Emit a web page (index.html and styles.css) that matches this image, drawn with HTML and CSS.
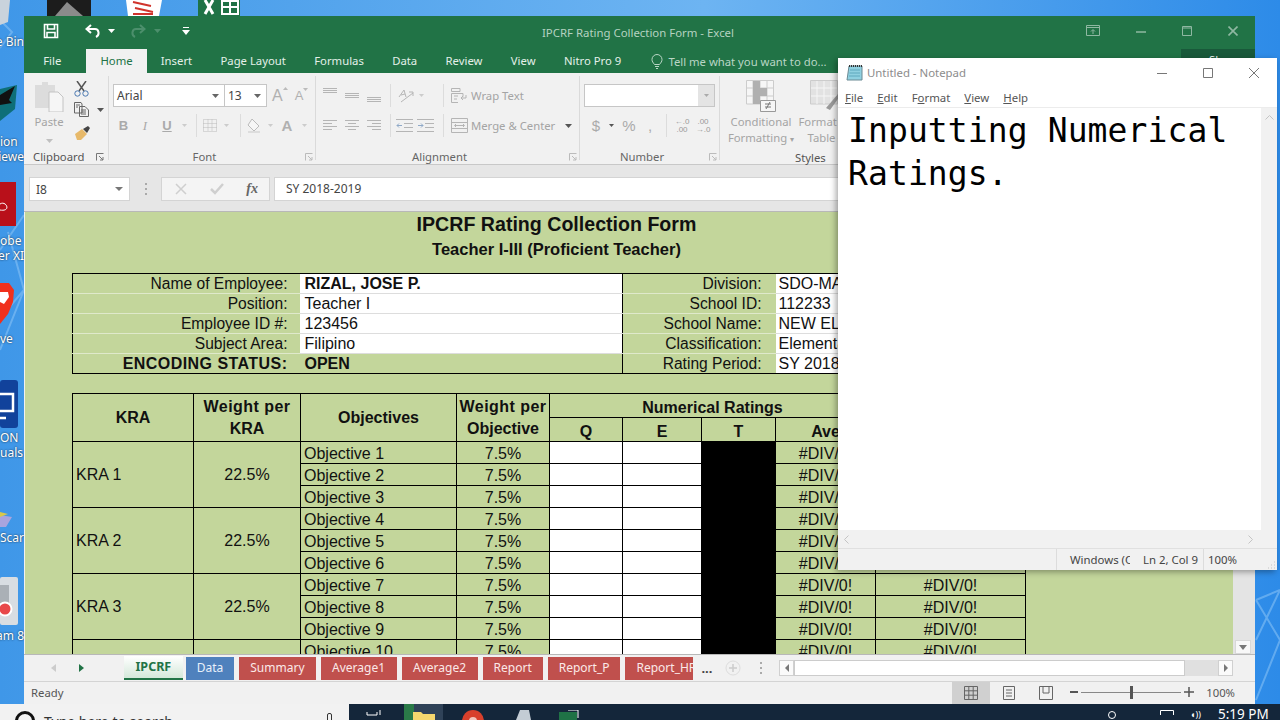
FILE: index.html
```html
<!DOCTYPE html>
<html lang="en">
<head>
<meta charset="utf-8">
<title>IPCRF Rating Collection Form - Excel</title>
<link rel="stylesheet" href="styles.css">
</head>
<body>
<div class="desktop">
  <svg class="wall" width="1280" height="720" viewBox="0 0 1280 720"><g stroke="#8cc4f5" stroke-width="2" fill="none" opacity=".55"><path d="M0 20 L12 32 L0 48"/><path d="M0 250 L24 215 M8 232 L24 290 L0 318 M24 290 L0 350"/><path d="M1256 640 L1280 590 M1256 600 L1280 640 L1256 700 M1280 590 L1256 600"/></g></svg>

  <div class="dicon d-bin"><svg width="12" height="26"><path d="M0 0H10L8 22L0 25Z" fill="#c9d3dc"/></svg></div>
  <div class="dlabel l-bin">e Bin</div>
  <div class="dicon d-top1"><svg width="44" height="16"><rect width="44" height="16" fill="#1c1c1c"/><path d="M8 16L20 2L36 16Z" fill="#8b8b8b"/></svg></div>
  <div class="dicon d-top2"><svg width="38" height="16"><path d="M1 0H37L34 16H3Z" fill="#fff"/><path d="M8 2L26 6M10 8L28 12M8 14H28" stroke="#d0342c" stroke-width="2" fill="none"/></svg></div>
  <div class="dicon d-top3"><svg width="44" height="16"><rect width="42" height="16" fill="#1f7246"/><path d="M7 0L15 14M15 0L7 14" stroke="#fff" stroke-width="3"/><path d="M24 1H40V14H24ZM24 7H40M32 1V14" stroke="#fff" stroke-width="2" fill="none"/></svg></div>
  <div class="dicon d-eagle"><svg width="17" height="36"><path d="M0 4L17 0L15 24L0 36Z" fill="#0e6f78"/><path d="M0 10L15 1L9 15L12 18L0 20Z" fill="#111"/></svg></div>
  <div class="dlabel l-ion">ion<br>iewe</div>
  <div class="dicon d-adobe"><svg width="16" height="44"><rect width="16" height="44" fill="#b9101a"/><path d="M0 22C6 18 12 30 0 28" stroke="#fff" fill="none"/></svg></div>
  <div class="dlabel l-obe">obe<br>er XI</div>
  <div class="dicon d-brave"><svg width="16" height="46"><path d="M0 3H9L14 10L13 22L8 34L0 44Z" fill="#f0301c"/><path d="M0 12H8L9 17L4 24L0 22Z" fill="#fff"/></svg></div>
  <div class="dlabel l-ve">ve</div>
  <div class="dicon d-mon"><svg width="18" height="48"><rect width="18" height="48" rx="3" fill="#11429b"/><path d="M0 14H13V31H0M0 38H6" stroke="#fff" stroke-width="2.5" fill="none"/></svg></div>
  <div class="dlabel l-on">ON<br>uals</div>
  <div class="dicon d-scan"><svg width="12" height="22"><path d="M0 10L12 12L6 22H0Z" fill="#a8a4de"/><path d="M0 7L8 9L0 12Z" fill="#d8c84a"/></svg></div>
  <div class="dlabel l-scar">Scar</div>
  <div class="dicon d-cam"><svg width="18" height="48"><rect width="18" height="48" rx="2" fill="#d8dde2"/><rect y="8" width="9" height="22" fill="#aab0b6"/><circle cx="5" cy="32" r="6.5" fill="#e8484a" stroke="#fff" stroke-width="2"/></svg></div>
  <div class="dlabel l-am">am 8</div>

  <main class="excel">
    <header class="titlebar">
      <div class="qat">
        <svg class="q-save" width="16" height="16" viewBox="0 0 16 16"><path d="M1.5 1.5H14.5V14.5H1.5ZM4.5 1.5V6H11.5V1.5M4 14.5V9.5H12V14.5" fill="none" stroke="#fff" stroke-width="1.6"/></svg>
        <svg class="q-undo" width="16" height="14" viewBox="0 0 16 14"><path d="M6 1L1.5 5L6 9M2 5H10C14 5 15 11 11 13" fill="none" stroke="#fff" stroke-width="2"/></svg>
        <svg class="q-caret" width="7" height="4"><path d="M0 0H7L3.5 4Z" fill="#fff"/></svg>
        <svg class="q-redo" width="16" height="14" viewBox="0 0 16 14"><path d="M10 1L14.5 5L10 9M14 5H6C2 5 1 11 5 13" fill="none" stroke="#4c8f6c" stroke-width="2"/></svg>
        <svg class="q-caret2" width="7" height="4"><path d="M0 0H7L3.5 4Z" fill="#4c8f6c"/></svg>
        <svg class="q-cust" width="8" height="8"><path d="M1 0H7V1H1ZM0 3H8L4 8Z" fill="#fff"/></svg>
      </div>
      <div class="doc-title">IPCRF Rating Collection Form - Excel</div>
      <div class="winctl">
        <svg width="14" height="12" viewBox="0 0 14 12"><path d="M.5.5H13.5V10.5H.5ZM.5 2.5H13.5M7 9V5M5 6.5L7 4.5L9 6.5" fill="none" stroke="#8fb8a2"/></svg>
        <svg width="10" height="10" viewBox="0 0 10 10"><path d="M0 6H10" stroke="#8fb8a2" stroke-width="1.5"/></svg>
        <svg width="10" height="10" viewBox="0 0 10 10"><path d="M.5.5H9.5V9.5H.5ZM.5 2H9.5" fill="none" stroke="#8fb8a2"/></svg>
        <svg width="10" height="10" viewBox="0 0 10 10"><path d="M.5.5L9.5 9.5M9.5.5L.5 9.5" stroke="#8fb8a2" stroke-width="1.6"/></svg>
      </div>
    </header>
    <nav class="tabs">
      <span class="rtab r-file">File</span>
      <span class="rtab active">Home</span>
      <span class="rtab">Insert</span>
      <span class="rtab">Page Layout</span>
      <span class="rtab">Formulas</span>
      <span class="rtab">Data</span>
      <span class="rtab">Review</span>
      <span class="rtab">View</span>
      <span class="rtab">Nitro Pro 9</span>
      <span class="tell"><svg width="12" height="15" viewBox="0 0 12 15"><path d="M3.5 10.5C2 8.5 1 7.500 1 5.500A5 5 0 0 1 11 5.500C11 7.500 10 8.500 8.500 10.500ZM4 12.500H8M5 14.500H7" fill="none" stroke="#b9d6c5"/></svg>Tell me what you want to do...</span>
      <span class="signin">Sign in</span>
      <span class="share">Share</span>
    </nav>

    <section class="ribbon">
      <div class="group g-clip">
        <div class="clip-body">
          <div class="paste">
            <svg width="30" height="31" viewBox="0 0 30 31"><path d="M1 4H8V1H14V4H21V27H1Z" fill="#dcdcdc"/><path d="M15 11H24L29 16V31H15Z" fill="#f6f6f6" stroke="#c4c4c4"/></svg>
            <span>Paste</span>
            <svg width="7" height="4"><path d="M0 0H7L3.500 4Z" fill="#c0c0c0"/></svg>
          </div>
          <div class="clip-tools">
            <svg width="15" height="16" viewBox="0 0 15 16"><path d="M3 0L10 10M12 0L5 10" stroke="#555" stroke-width="1.500"/><circle cx="3.500" cy="12.500" r="2.700" fill="none" stroke="#4a78b0"/><circle cx="11.500" cy="12.500" r="2.700" fill="none" stroke="#4a78b0"/></svg>
            <div class="copyrow"><svg width="15" height="15" viewBox="0 0 15 15"><path d="M.5.5H7L8 2V11H.5ZM5.500 4.500H11L14.500 8V14.500H5.500Z" fill="#f1f1f1" stroke="#666"/><path d="M2 3H6M2 5H4M7 8H12M7 10H12M7 12H12" stroke="#666"/></svg><svg width="7" height="4"><path d="M0 0H7L3.500 4Z" fill="#555"/></svg></div>
            <svg width="16" height="14" viewBox="0 0 16 14"><path d="M1 8L8 3L13 8L7 14H3Z" fill="#e7b96a"/><path d="M9 3L14 0L16 2L13 7Z" fill="#444"/></svg>
          </div>
        </div>
        <div class="glabel lab-clip">Clipboard<svg class="launch" width="8" height="8"><path d="M.5 7.500V.5H7.500M3 3L7 7M4 7H7V4" fill="none" stroke="#777"/></svg></div>
      </div>

      <div class="group g-font">
        <div class="tools">
          <div class="row">
            <div class="combo c-font">Arial<svg width="7" height="4"><path d="M0 0H7L3.500 4Z" fill="#666"/></svg></div>
            <div class="combo c-size">13<svg width="7" height="4"><path d="M0 0H7L3.500 4Z" fill="#666"/></svg></div>
            <span class="bigA a1">A<svg width="5" height="3"><path d="M0 3H5L2.500 0Z" fill="#bbb"/></svg></span>
            <span class="bigA a2">A<svg width="5" height="3"><path d="M0 0H5L2.500 3Z" fill="#bbb"/></svg></span>
          </div>
          <div class="row">
            <span class="cell w21 fmt bold">B</span>
            <span class="cell w22 fmt ital">I</span>
            <span class="cell w22 fmt und">U</span>
            <span class="cell w12"><svg width="5" height="3"><path d="M0 0H5L2.500 3Z" fill="#ccc"/></svg></span>
            <span class="cell w12"><i class="sep"></i></span>
            <span class="cell w16"><svg width="14" height="13" viewBox="0 0 14 13"><path d="M.5.5H13.500V12.500H.5ZM5 .5V12.500M9 .5V12.500M.5 4.500H13.500M.5 8.500H13.500" fill="none" stroke="#bbb" stroke-dasharray="1 1"/></svg></span>
            <span class="cell w16"><svg width="5" height="3"><path d="M0 0H5L2.500 3Z" fill="#ccc"/></svg></span>
            <span class="cell w12"><i class="sep"></i></span>
            <span class="cell w16"><svg width="15" height="15" viewBox="0 0 15 15"><path d="M5 1L12 8L7 13L1 7Z" fill="#f6f6f6" stroke="#bbb"/><path d="M1 14H13" stroke="#ddd" stroke-width="2"/></svg></span>
            <span class="cell w16"><svg width="5" height="3"><path d="M0 0H5L2.500 3Z" fill="#ccc"/></svg></span>
            <span class="cell w18 bigA a3">A</span>
            <span class="cell w16"><svg width="5" height="3"><path d="M0 0H5L2.500 3Z" fill="#ccc"/></svg></span>
          </div>
        </div>
        <div class="glabel lab-c">Font<svg class="launch" width="8" height="8"><path d="M.5 7.500V.5H7.500M3 3L7 7M4 7H7V4" fill="none" stroke="#bbb"/></svg></div>
      </div>

      <div class="group g-align">
        <div class="tools">
          <div class="row">
            <span class="cell w22 top"><svg width="14" height="6"><path d="M0 .5H14M0 2.500H14M0 4.500H14" stroke="#b5b5b5"/></svg></span>
            <span class="cell w22"><svg width="14" height="6"><path d="M0 .5H14M0 2.500H14M0 4.500H14" stroke="#b5b5b5"/></svg></span>
            <span class="cell w22 bot"><svg width="14" height="6"><path d="M0 .5H14M0 2.500H14M0 4.500H14" stroke="#b5b5b5"/></svg></span>
            <span class="cell w10"><i class="sep"></i></span>
            <span class="cell w22"><svg width="16" height="14" viewBox="0 0 16 14"><path d="M1 8L6 1L8 8M3 6L7 5M3 13L15 4M11 3H15V7" fill="none" stroke="#b5b5b5"/></svg></span>
            <span class="cell w8"><svg width="5" height="3"><path d="M0 0H5L2.500 3Z" fill="#ccc"/></svg></span>
            <span class="cell w13"></span>
            <span class="cell w10"><i class="sep"></i></span>
            <svg class="ic-l" width="17" height="15" viewBox="0 0 17 15"><path d="M.5.5H9V3.500H.5ZM.5 5.500H12V8.500M.5 5.500V14.500H7M3 8H7M3 11H6M15 7V10H10M12 8L10 10L12 12" fill="none" stroke="#b5b5b5"/></svg>
            <span class="dim-text">Wrap Text</span>
          </div>
          <div class="row">
            <span class="cell w22"><svg width="14" height="11"><path d="M0 .5H14M0 3.500H9M0 6.500H14M0 9.500H9" stroke="#b5b5b5"/></svg></span>
            <span class="cell w22"><svg width="14" height="11"><path d="M0 .5H14M3 3.500H11M0 6.500H14M3 9.500H11" stroke="#b5b5b5"/></svg></span>
            <span class="cell w22"><svg width="14" height="11"><path d="M0 .5H14M5 3.500H14M0 6.500H14M5 9.500H14" stroke="#b5b5b5"/></svg></span>
            <span class="cell w10"><i class="sep"></i></span>
            <span class="cell w18"><svg width="17" height="13" viewBox="0 0 17 13"><path d="M0 .5H17M8 4.500H17M8 8.500H17M0 12.500H17" stroke="#b5b5b5"/><path d="M6 6.500H1M3 4.500L1 6.500L3 8.500" stroke="#8fa9c8" fill="none"/></svg></span>
            <span class="cell w25"><svg width="17" height="13" viewBox="0 0 17 13"><path d="M0 .5H17M8 4.500H17M8 8.500H17M0 12.500H17" stroke="#b5b5b5"/><path d="M1 6.500H6M4 4.500L6 6.500L4 8.500" stroke="#8fa9c8" fill="none"/></svg></span>
            <span class="cell w10"><i class="sep"></i></span>
            <svg class="ic-l" width="17" height="15" viewBox="0 0 17 15"><path d="M.5.5H16.500V14.500H.5ZM.5 4.500H16.500M.5 10.500H16.500M4 7.500H13M5 6L3.500 7.500L5 9M12 6L13.500 7.500L12 9" fill="none" stroke="#b5b5b5"/></svg>
            <span class="dim-text">Merge &amp; Center</span>
            <svg class="merge-caret" width="7" height="4"><path d="M0 0H7L3.500 4Z" fill="#555"/></svg>
          </div>
        </div>
        <div class="glabel lab-c">Alignment<svg class="launch" width="8" height="8"><path d="M.5 7.500V.5H7.500M3 3L7 7M4 7H7V4" fill="none" stroke="#bbb"/></svg></div>
      </div>

      <div class="group g-num">
        <div class="tools">
          <div class="row">
            <div class="combo c-num"><b class="combo-btn"><svg width="5" height="3"><path d="M0 0H5L2.500 3Z" fill="#aaa"/></svg></b></div>
          </div>
          <div class="row">
            <span class="cell w24 money">$</span>
            <span class="cell w6"><svg width="5" height="3"><path d="M0 0H5L2.500 3Z" fill="#555"/></svg></span>
            <span class="cell w30 money">%</span>
            <span class="cell w12 money">,</span>
            <span class="cell w10 ml5"><i class="sep"></i></span>
            <span class="cell w22 dec">←.0<br>.00</span>
            <span class="cell w20 dec">.00<br>→.0</span>
          </div>
        </div>
        <div class="glabel lab-c">Number<svg class="launch" width="8" height="8"><path d="M.5 7.500V.5H7.500M3 3L7 7M4 7H7V4" fill="none" stroke="#bbb"/></svg></div>
      </div>

      <div class="group g-styles">
        <div class="style-body">
          <div class="style-btn sb-cond">
            <svg width="30" height="32" viewBox="0 0 30 32"><path d="M.5.5H27.500V24H.5Z" fill="#f6f6f6" stroke="#ccc"/><path d="M7 1V24M14 1V24M21 1V24M1 8H27M1 16H27" stroke="#ccc"/><path d="M7 1H14V8H21V16H14V24H7Z" fill="#b0b0b0"/><path d="M14.500 20.500H29.500V31.500H14.500Z" fill="#f6f6f6" stroke="#999"/><path d="M19 24H25M19 27H25M24 22L20 29" stroke="#777"/></svg>
            <span>Conditional<br>Formatting <small>▾</small></span>
          </div>
          <div class="style-btn sb-table">
            <svg width="30" height="32" viewBox="0 0 30 32"><path d="M.5.5H27.500V24H.5Z" fill="#e2e2e2" stroke="#ccc"/><path d="M7 1V24M14 1V24M21 1V24M1 8H27M1 16H27" stroke="#f6f6f6"/><path d="M16 28L28 14L30 16L20 30Z" fill="#999"/></svg>
            <span>Format as<br>Table <small>▾</small></span>
          </div>
        </div>
        <div class="glabel lab-styles">Styles</div>
      </div>
    </section>

    <section class="fbar">
      <div class="namebox">I8<svg width="8" height="4"><path d="M0 0H8L4 4Z" fill="#777"/></svg></div>
      <div class="fdots"><i></i><i></i><i></i></div>
      <div class="fbtns">
        <svg width="12" height="12" viewBox="0 0 12 12"><path d="M1 1L11 11M11 1L1 11" stroke="#cfcfcf" stroke-width="1.500"/></svg>
        <svg width="14" height="12" viewBox="0 0 14 12"><path d="M1 6L5 10L13 1" fill="none" stroke="#cfcfcf" stroke-width="2.500"/></svg>
        <span class="fx">fx</span>
      </div>
      <div class="finput">SY 2018-2019</div>
    </section>

    <section class="workspace">
      <div class="sheet">
        <div class="sheet-inner">
          <h1 class="s-title">IPCRF Rating Collection Form</h1>
          <h2 class="s-sub">Teacher I-III (Proficient Teacher)</h2>
          <table class="info">
            <colgroup><col class="ic1"><col class="ic2"><col class="ic3"><col class="ic4"></colgroup>
            <tr><td class="lbl">Name of Employee:</td><td class="val strong">RIZAL, JOSE P.</td><td class="lbl div">Division:</td><td class="val">SDO-MANILA</td></tr>
            <tr><td class="lbl">Position:</td><td class="val">Teacher I</td><td class="lbl div">School ID:</td><td class="val">112233</td></tr>
            <tr><td class="lbl">Employee ID #:</td><td class="val">123456</td><td class="lbl div">School Name:</td><td class="val">NEW ELEMENTARY</td></tr>
            <tr><td class="lbl">Subject Area:</td><td class="val">Filipino</td><td class="lbl div">Classification:</td><td class="val">Elementary</td></tr>
            <tr class="last"><td class="lbl status-lbl">ENCODING STATUS:</td><td class="plain strong">OPEN</td><td class="lbl div">Rating Period:</td><td class="val">SY 2018-2019</td></tr>
          </table>
          <table class="rate">
            <colgroup><col class="c1"><col class="c2"><col class="c3"><col class="c4"><col class="c5"><col class="c6"><col class="c7"><col class="c8"><col class="c9"></colgroup>
            <tr class="h1"><th rowspan="2">KRA</th><th rowspan="2"><span class="wide">Weight per</span><br>KRA</th><th rowspan="2">Objectives</th><th rowspan="2"><span class="wide">Weight per</span><br>Objective</th><th colspan="4">Numerical Ratings</th><th rowspan="2">Weighted Score</th></tr>
            <tr class="h2"><th>Q</th><th>E</th><th>T</th><th>Ave</th></tr>
            <tr><td rowspan="3" class="left">KRA 1</td><td rowspan="3">22.5%</td><td class="left">Objective 1</td><td>7.5%</td><td class="w"></td><td class="w"></td><td class="k"></td><td>#DIV/0!</td><td>#DIV/0!</td></tr>
            <tr><td class="left">Objective 2</td><td>7.5%</td><td class="w"></td><td class="w"></td><td class="k"></td><td>#DIV/0!</td><td>#DIV/0!</td></tr>
            <tr><td class="left">Objective 3</td><td>7.5%</td><td class="w"></td><td class="w"></td><td class="k"></td><td>#DIV/0!</td><td>#DIV/0!</td></tr>
            <tr><td rowspan="3" class="left">KRA 2</td><td rowspan="3">22.5%</td><td class="left">Objective 4</td><td>7.5%</td><td class="w"></td><td class="w"></td><td class="k"></td><td>#DIV/0!</td><td>#DIV/0!</td></tr>
            <tr><td class="left">Objective 5</td><td>7.5%</td><td class="w"></td><td class="w"></td><td class="k"></td><td>#DIV/0!</td><td>#DIV/0!</td></tr>
            <tr><td class="left">Objective 6</td><td>7.5%</td><td class="w"></td><td class="w"></td><td class="k"></td><td>#DIV/0!</td><td>#DIV/0!</td></tr>
            <tr><td rowspan="3" class="left">KRA 3</td><td rowspan="3">22.5%</td><td class="left">Objective 7</td><td>7.5%</td><td class="w"></td><td class="w"></td><td class="k"></td><td>#DIV/0!</td><td>#DIV/0!</td></tr>
            <tr><td class="left">Objective 8</td><td>7.5%</td><td class="w"></td><td class="w"></td><td class="k"></td><td>#DIV/0!</td><td>#DIV/0!</td></tr>
            <tr><td class="left">Objective 9</td><td>7.5%</td><td class="w"></td><td class="w"></td><td class="k"></td><td>#DIV/0!</td><td>#DIV/0!</td></tr>
            <tr><td rowspan="3" class="left"></td><td rowspan="3"></td><td class="left">Objective 10</td><td>7.5%</td><td class="w"></td><td class="w"></td><td class="k"></td><td>#DIV/0!</td><td>#DIV/0!</td></tr>
          </table>
        </div>
      </div>
      <div class="vscroll"><span class="sbtn"><svg width="8" height="5"><path d="M0 0H8L4 5Z" fill="#777"/></svg></span></div>
    </section>

    <section class="sheetbar">
      <div class="tabnav">
        <svg width="5" height="8"><path d="M5 0V8L0 4Z" fill="#ccc"/></svg>
        <svg width="5" height="8"><path d="M0 0V8L5 4Z" fill="#217346"/></svg>
      </div>
      <div class="stabs">
        <span class="stab on">IPCRF</span>
        <span class="stab blue">Data</span>
        <span class="stab red">Summary</span>
        <span class="stab red avg">Average1</span>
        <span class="stab red avg">Average2</span>
        <span class="stab red">Report</span>
        <span class="stab red">Report_P</span>
        <span class="stab red clipped">Report_HR</span>
      </div>
      <span class="more">...</span>
      <svg class="addsheet" width="16" height="16" viewBox="0 0 16 16"><circle cx="8" cy="8" r="7" fill="none" stroke="#ddd"/><path d="M8 4V12M4 8H12" stroke="#ccc" stroke-width="1.500"/></svg>
      <div class="fdots sdots"><i></i><i></i><i></i></div>
      <div class="hscroll">
        <span class="hbtn"><svg width="4" height="8"><path d="M4 0V8L0 4Z" fill="#777"/></svg></span>
        <span class="hthumb"></span>
        <span class="hbtn hbtn-r"><svg width="4" height="8"><path d="M0 0V8L4 4Z" fill="#777"/></svg></span>
      </div>
    </section>

    <footer class="status">
      <span>Ready</span>
      <div class="views">
        <span class="vw on"><svg width="14" height="14" viewBox="0 0 14 14"><path d="M.5.5H13.500V13.500H.5ZM.5 4.800H13.500M.5 9.200H13.500M4.800.5V13.500M9.200.5V13.500" fill="none" stroke="#666"/></svg></span>
        <span class="vw"><svg width="12" height="14" viewBox="0 0 12 14"><path d="M.5.5H11.500V13.500H.5ZM3 4H9M3 7H9M3 10H9" fill="none" stroke="#666"/></svg></span>
        <span class="vw"><svg width="14" height="14" viewBox="0 0 14 14"><path d="M.5.5H13.500V13.500H.5ZM4 .5V7H10V.5" fill="none" stroke="#666"/></svg></span>
      </div>
      <div class="zoom">
        <svg width="8" height="8"><path d="M0 4H8" stroke="#555" stroke-width="2"/></svg>
        <span class="zline"><i></i></span>
        <svg width="10" height="10"><path d="M0 5H10M5 0V10" stroke="#555" stroke-width="1.500"/></svg>
      </div>
      <span class="zpct">100%</span>
    </footer>
  </main>

  <aside class="notepad">
    <div class="np-title">
      <svg width="17" height="17" viewBox="0 0 17 17"><path d="M3 2H16V16H1Z" fill="#8fd0e0" stroke="#6a8a94"/><path d="M3 2H16" stroke="#333" stroke-width="2" stroke-dasharray="1 1"/><path d="M4 6H14M3.500 9H14M3 12H14" stroke="#5fa8bd"/></svg>
      <span class="np-name">Untitled - Notepad</span>
      <div class="np-ctl">
        <svg width="10" height="10"><path d="M0 5.500H10" stroke="#777"/></svg>
        <svg width="10" height="10"><path d="M.5.5H9.500V9.500H.5Z" fill="none" stroke="#777"/></svg>
        <svg width="10" height="10"><path d="M0 0L10 10M10 0L0 10" stroke="#777"/></svg>
      </div>
    </div>
    <div class="np-menu"><span><u>F</u>ile</span><span><u>E</u>dit</span><span>F<u>o</u>rmat</span><span><u>V</u>iew</span><span><u>H</u>elp</span></div>
    <div class="np-main">
      <div class="np-text">Inputting Numerical<br>Ratings.</div>
      <div class="np-v"><svg width="9" height="5"><path d="M.5 4.500L4.500 .5L8.500 4.500" fill="none" stroke="#c4c4c4"/></svg></div>
    </div>
    <div class="np-h"><svg width="5" height="9"><path d="M4.500 .5L.5 4.500L4.500 8.500" fill="none" stroke="#c4c4c4"/></svg><svg width="5" height="9"><path d="M.5 .5L4.500 4.500L.5 8.500" fill="none" stroke="#c4c4c4"/></svg></div>
    <div class="np-status">
      <span class="st-enc">Windows (CRLF)</span>
      <span class="st-pos">Ln 2, Col 9</span>
      <span class="st-zoom">100%</span>
      <svg class="grip" width="10" height="10"><path d="M8 2H9M5 5H6M8 5H9M2 8H3M5 8H6M8 8H9" stroke="#c4c4c4"/></svg>
    </div>
  </aside>

  <footer class="taskbar">
    <div class="search">
      <span class="cort"></span>
      <span class="search-text">Type here to search</span>
      <span class="mic"></span>
    </div>
    <div class="task-apps">
      <span class="tk tk-view"><svg width="16" height="10"><path d="M1 2V5H11V2M14 0V5" stroke="#fff" fill="none"/></svg></span>
      <span class="tk tk-files"><svg width="22" height="10"><path d="M0 2H8L10 4H22V12H0Z" fill="#f5d76e"/></svg></span>
      <span class="tk tk-chrome"><svg width="22" height="10"><circle cx="11" cy="11" r="11" fill="#d8402c"/><circle cx="11" cy="11" r="4" fill="#f2c7bd"/></svg></span>
      <span class="tk tk-disc"><svg width="22" height="10"><path d="M5 10L9 0H18L20 10Z" fill="#c3ccd4"/></svg></span>
      <span class="tk tk-xl"><svg width="22" height="10"><rect width="18" height="12" y="2" fill="#1f7246"/><path d="M9 0H19V8" stroke="#fff" fill="none"/></svg></span>
    </div>
    <div class="tray">
      <svg width="10" height="10"><circle cx="5" cy="5" r="3.500" fill="none" stroke="#fff"/></svg>
      <svg class="tray-net" width="14" height="10"><path d="M.5 5V.5H13.500V5" fill="none" stroke="#fff"/></svg>
      <span class="tray-vol">◖))</span>
      <span class="clock">5:19 PM</span>
    </div>
  </footer>
</div>
</body>
</html>
```
FILE: styles.css
```css
* { box-sizing: border-box; }
html, body { margin: 0; padding: 0; }
body { width: 1280px; height: 720px; overflow: hidden; font-family: "Noto Sans", "Liberation Sans", sans-serif; }
svg { display: block; flex: none; }

.desktop { position: relative; width: 1280px; height: 720px; overflow: hidden; background: linear-gradient(90deg, #3f97e8 0%, #6db4f2 55%, #2d8be8 100%); }
.wall { position: absolute; left: 0; top: 0; }
.dicon { position: absolute; }
.dlabel { position: absolute; left: 0; width: 24px; overflow: hidden; white-space: nowrap; font-size: 12px; line-height: 15px; color: #fff; text-shadow: 0 0 2px #123; direction: rtl; text-align: left; }
.d-bin { left: 0; top: 0; }
.d-top1 { left: 47px; top: 0; }
.d-top2 { left: 125px; top: 0; }
.d-top3 { left: 198px; top: 0; }
.d-eagle { left: 0; top: 85px; }
.d-adobe { left: 0; top: 182px; }
.d-brave { left: 0; top: 280px; }
.d-mon { left: 0; top: 380px; }
.d-scan { left: 0; top: 505px; }
.d-cam { left: 0; top: 577px; }
.l-bin { top: 34px; }
.l-ion { top: 134px; }
.l-obe { top: 233px; }
.l-ve { top: 331px; }
.l-on { top: 430px; }
.l-scar { top: 530px; }
.l-am { top: 628px; }

/* Excel window */
.excel { position: absolute; left: 24px; top: 16px; width: 1231px; height: 688px; display: flex; flex-direction: column; background: #f1f1f1; }
.titlebar { height: 33px; flex: none; background: #217346; display: flex; align-items: center; position: relative; color: #b5d2c1; font-size: 11.4px; }
.qat { display: flex; align-items: center; padding-left: 19px; margin-top: -3px; }
.q-undo { margin-left: 26px; }
.q-caret { margin-left: 7px; }
.q-redo { margin-left: 15px; }
.q-caret2 { margin-left: 8px; }
.q-cust { margin-left: 21px; }
.doc-title { position: absolute; left: 518px; top: 8px; line-height: 17px; white-space: nowrap; }
.winctl { margin-left: auto; margin-top: -3px; display: flex; align-items: center; padding-right: 17px; gap: 36px; }
.tabs { height: 24px; flex: none; background: #217346; display: flex; align-items: center; padding-left: 5px; font-size: 11.3px; color: #e4f0e9; position: relative; }
.rtab { height: 24px; line-height: 23px; padding: 0 14.2px; white-space: nowrap; }
.r-file { margin-right: 11px; }
.rtab.active { background: #f1f1f1; color: #217346; padding: 0 14px; }
.tell { display: flex; align-items: center; gap: 5px; color: #b9d6c5; margin-left: 16px; white-space: nowrap; line-height: 23px; }
.signin { margin-left: auto; margin-right: 30px; }
.share { width: 74px; height: 24px; background: #19593a; padding-left: 28px; line-height: 22px; }

/* Ribbon */
.ribbon { height: 92px; flex: none; display: flex; background: #f1f1f1; border-bottom: 1px solid #c8c8c8; padding: 3px 0 0; color: #999; font-size: 11.3px; }
.group { display: flex; flex-direction: column; justify-content: space-between; position: relative; flex: none; }
.group::after { content: ""; position: absolute; right: 0; top: 0; bottom: 4px; width: 1px; background: #dadada; }
.g-clip { width: 85px; }
.g-font { width: 207px; padding-left: 4px; }
.g-align { width: 264px; padding-left: 3px; }
.g-num { width: 140px; padding-left: 4px; }
.g-styles { width: 200px; }
.g-styles::after { display: none; }
.glabel { height: 18px; padding-top: 2px; line-height: 17px; text-align: center; color: #666; font-size: 11.3px; position: relative; flex: none; }
.lab-c { padding-right: 20px; }
.lab-clip { text-align: left; padding-left: 9px; color: #555; }
.lab-styles { text-align: left; padding-left: 75px; color: #555; }
.launch { position: absolute; right: 3px; top: 7px; }
.lab-clip .launch { right: 5px; }
.tools { display: flex; flex-direction: column; gap: 7px; padding-top: 8px; }
.row { display: flex; align-items: center; height: 23px; }
.combo { height: 23px; background: #fff; border: 1px solid #c6c6c6; color: #444; display: flex; align-items: center; justify-content: space-between; padding: 0 5px 0 3px; font-size: 12px; }
.c-font { width: 112px; }
.c-size { width: 43px; margin-left: -1px; }
.c-num { width: 131px; padding: 0; justify-content: flex-end; }
.combo-btn { width: 16px; height: 21px; background: #e4e4e4; display: flex; align-items: center; justify-content: center; }
.bigA { font-family: "Liberation Sans", sans-serif; color: #b0b0b0; font-weight: 400; display: flex; align-items: flex-start; }
.a1 { font-size: 16px; margin-left: 5px; }
.a2 { font-size: 13px; margin-left: 7px; }
.a3 { font-size: 15px; font-weight: 700; justify-content: center; align-items: center; }
.cell { display: flex; align-items: center; justify-content: center; flex: none; height: 23px; }
.top { align-items: flex-start; padding-top: 4px; }
.bot { align-items: flex-end; padding-bottom: 4px; }
.w6 { width: 6px; } .w8 { width: 8px; } .w10 { width: 10px; } .w12 { width: 12px; } .w13 { width: 13px; }
.w16 { width: 16px; } .w18 { width: 18px; } .w20 { width: 20px; } .w21 { width: 21px; } .w22 { width: 22px; }
.w24 { width: 24px; } .w25 { width: 25px; } .w30 { width: 30px; }
.ml5 { margin-left: 5px; }
.sep { display: block; width: 1px; height: 23px; background: #dcdcdc; }
.fmt { font-family: "Liberation Sans", sans-serif; font-size: 13px; color: #aaa; }
.bold { font-weight: 700; }
.ital { font-style: italic; font-family: "Liberation Serif", serif; }
.und { text-decoration: underline; font-weight: 700; }
.ic-l { margin-left: 3px; }
.dim-text { margin-left: 3px; color: #a4a4a4; white-space: nowrap; }
.merge-caret { margin-left: 10px; }
.money { font-family: "Liberation Sans", sans-serif; font-size: 15px; color: #aaa; }
.dec { font-size: 8px; line-height: 8px; color: #999; text-align: center; flex-direction: column; font-family: "Liberation Sans", sans-serif; }
.clip-body { display: flex; padding-top: 5px; }
.paste { width: 50px; display: flex; flex-direction: column; align-items: center; color: #a4a4a4; }
.paste span { line-height: 17px; margin-top: 1px; }
.paste svg:last-child { margin-top: 9px; }
.clip-tools { display: flex; flex-direction: column; gap: 7px; }
.copyrow { display: flex; align-items: center; gap: 8px; margin: -2px 0 2px; }
.style-body { display: flex; padding-top: 4px; }
.style-btn { display: flex; flex-direction: column; align-items: center; text-align: center; color: #a4a4a4; line-height: 16px; white-space: nowrap; }
.style-btn span { margin-top: 2px; }
.style-btn small { font-size: 8px; }
.sb-cond { width: 82px; }
.sb-table { width: 46px; }

/* Formula bar */
.fbar { height: 47px; flex: none; background: #e6e6e6; display: flex; align-items: flex-start; padding: 12px 0 0 5px; border-bottom: 1px solid #b8b8b8; }
.namebox { width: 101px; height: 24px; background: #fff; border: 1px solid #d4d4d4; display: flex; align-items: center; justify-content: space-between; padding: 0 6px 0 6px; font-size: 12px; color: #444; }
.fdots { width: 31px; height: 24px; display: flex; flex-direction: column; align-items: center; justify-content: center; gap: 3px; }
.fdots i { display: block; width: 2px; height: 2px; background: #aaa; }
.fbtns { width: 109px; height: 24px; background: #f4f4f4; border: 1px solid #d4d4d4; display: flex; align-items: center; justify-content: space-between; padding: 0 11px 0 13px; }
.fx { font-family: "Liberation Serif", serif; font-style: italic; font-weight: 700; font-size: 14px; color: #666; }
.finput { width: 957px; height: 24px; margin-left: 4px; background: #fff; border: 1px solid #d4d4d4; padding-left: 11px; font-size: 12px; line-height: 22px; color: #444; }

/* Sheet */
.workspace { flex: 1; min-height: 0; display: flex; }
.sheet { flex: 1; min-width: 0; overflow: hidden; background: #c3d69b; margin-left: 1px; color: #111; font-family: "Liberation Sans", Arial, sans-serif; font-size: 16px; }
.sheet-inner { width: 969px; margin-left: 47px; padding-top: 1px; }
.s-title { margin: 0; height: 22px; line-height: 23px; font-size: 19.6px; font-weight: 700; text-align: center; }
.s-sub { margin: 3px 0 0; height: 22px; line-height: 22px; font-size: 16.5px; font-weight: 700; text-align: center; }
table { border-collapse: collapse; table-layout: fixed; }
.info { margin-top: 13px; width: 953px; border: 1px solid #000; }
.ic1 { width: 227px; } .ic2 { width: 323px; } .ic3 { width: 153px; } .ic4 { width: 250px; }
.info td { height: 20px; padding: 0; line-height: 18px; white-space: nowrap; overflow: hidden; border-bottom: 1px solid #dfe9cb; }
.info .last td { border-bottom: 0; }
.info td.lbl { text-align: right; padding-right: 12px; font-size: 15.6px; }
.info td.div { border-left: 1px solid #000; padding-right: 14px; }
.info td.val { background: #fff; padding-left: 5px; border-bottom-color: #ddd; }
.info td.val:last-child { padding-left: 3px; }
.info td.plain { padding-left: 5px; }
.info td.status-lbl { font-size: 16px; font-weight: 700; letter-spacing: .45px; }
.strong { font-weight: 700; }
.rate { margin-top: 19px; width: 953px; }
.c1 { width: 121px; } .c2 { width: 107px; } .c3 { width: 156px; } .c4 { width: 93px; } .c5 { width: 73px; } .c6 { width: 79px; } .c7 { width: 74px; } .c8 { width: 100px; } .c9 { width: 150px; }
.rate td, .rate th { border: 1px solid #000; padding: 2px 0 0; height: 22px; text-align: center; line-height: 19px; overflow: hidden; white-space: nowrap; }
.rate th { font-weight: 700; line-height: 22px; padding: 0; }
.rate td[rowspan] { padding-top: 0; }
.rate .h1 th, .rate .h2 th { height: 24px; }
.rate .h1 th[colspan] { padding-top: 4px; line-height: 19px; }
.rate .h2 th { padding-top: 4px; line-height: 19px; }
.rate td.left { text-align: left; padding-left: 3px; }
.rate td.w { background: #fff; }
.rate td.k { background: #000; }
.wide { letter-spacing: .45px; }
.vscroll { width: 22px; flex: none; background: #e4e4e4; display: flex; align-items: flex-end; justify-content: center; padding: 0 3px 0 0; }
.sbtn { width: 16px; height: 14px; background: #f8f8f8; border: 1px solid #d8d8d8; display: flex; align-items: center; justify-content: center; }

/* Sheet tabs */
.sheetbar { height: 28px; flex: none; display: flex; align-items: center; background: #f1f1f1; border-top: 1px solid #b8b8b8; border-bottom: 1px solid #d4d4d4; }
.tabnav { width: 100px; display: flex; align-items: center; gap: 23px; padding-left: 27px; flex: none; }
.stabs { display: flex; gap: 5px; align-self: flex-start; margin-top: 2px; flex: none; font-size: 12px; color: #fff; }
.stab { height: 23px; line-height: 22px; padding: 0 11px; white-space: nowrap; }
.stab.on { background: linear-gradient(#fff, #d4e8da); color: #217346; font-weight: 700; font-size: 12.5px; border-bottom: 2px solid #217346; padding: 0 11.5px; height: 24px; margin-top: -1px; margin-right: -2px; }
.blue { background: #4f81bd; color: #e8f0fa; }
.red { background: #c0504d; color: #fbe9e8; }
.stab.avg { padding: 0 11.5px; }
.clipped { width: 68px; overflow: hidden; }
.more { margin-left: 8px; width: 12px; font-size: 13px; font-weight: 700; color: #444; line-height: 14px; flex: none; }
.addsheet { margin-left: 12px; }
.sdots { width: 34px; margin-left: 3px; }
.hscroll { flex: none; width: 454px; height: 16px; display: flex; background: #e0e0e0; margin-left: 1px; }
.hbtn { width: 15px; flex: none; background: #fafafa; border: 1px solid #d0d0d0; display: flex; align-items: center; justify-content: center; }
.hthumb { width: 391px; background: #fff; border: 1px solid #ccc; }
.hbtn-r { margin-left: auto; }

/* Status bar */
.status { height: 22px; flex: none; display: flex; align-items: center; background: #f1f1f1; padding: 0 0 2px 7px; font-size: 11.3px; color: #555; }
.views { margin-left: auto; display: flex; height: 22px; margin-right: 5px; margin-bottom: -2px; }
.vw { width: 37.6px; display: flex; align-items: center; justify-content: center; }
.vw.on { background: #d0d0d0; }
.zoom { display: flex; align-items: center; width: 124px; gap: 3px; }
.zline { flex: 1; height: 1px; background: #888; position: relative; display: block; }
.zline i { position: absolute; left: 49px; top: -6px; width: 3px; height: 13px; background: #555; }
.zpct { width: 57px; text-align: right; padding-right: 20px; margin-left: 4px; }

/* Notepad */
.notepad { position: absolute; left: 838px; top: 58px; width: 439px; height: 512px; background: #fff; display: flex; flex-direction: column; box-shadow: -2px 2px 6px rgba(0,0,0,.35); }
.np-title { height: 29px; flex: none; display: flex; align-items: center; padding-left: 8px; font-size: 11.4px; color: #8c8c8c; }
.np-name { margin-left: 4px; }
.np-ctl { margin-left: auto; display: flex; align-items: center; gap: 36px; padding-right: 18px; }
.np-menu { height: 21px; flex: none; display: flex; align-items: center; padding-left: 7px; gap: 14px; font-size: 11.4px; color: #555; border-bottom: 1px solid #ececec; }
.np-main { flex: 1; min-height: 0; display: flex; }
.np-text { flex: 1; padding: 1px 0 0 10px; font-family: "DejaVu Sans Mono", "Liberation Mono", monospace; font-size: 33px; line-height: 43px; letter-spacing: .1px; color: #000; white-space: nowrap; }
.np-v { width: 16px; flex: none; background: #f1f1f1; display: flex; justify-content: center; padding-top: 7px; }
.np-h { height: 18px; flex: none; background: #f1f1f1; display: flex; align-items: center; justify-content: space-between; padding: 0 24px 0 6px; }
.np-status { height: 22px; flex: none; background: #f1f1f1; border-top: 1px solid #e0e0e0; display: flex; align-items: center; font-size: 11.4px; color: #444; padding-left: 218px; }
.st-enc { width: 74px; border-left: 1px solid #dcdcdc; padding-left: 13px; overflow: hidden; white-space: nowrap; line-height: 21px; }
.st-pos { width: 73px; padding-left: 13px; white-space: nowrap; line-height: 21px; }
.st-zoom { border-left: 1px solid #dcdcdc; padding-left: 4px; line-height: 21px; }
.grip { margin-left: auto; margin-right: 1px; align-self: flex-end; }

/* Taskbar */
.taskbar { position: absolute; left: 0; right: 0; top: 704px; height: 16px; background: #14263a; display: flex; overflow: hidden; color: #fff; }
.search { width: 349px; height: 16px; background: #f2f2f2; display: flex; padding-left: 15px; overflow: hidden; flex: none; }
.cort { width: 20px; height: 20px; border-radius: 50%; border: 3px solid #111; margin-top: 7px; flex: none; }
.search-text { margin-left: 9px; font-size: 14px; line-height: 18px; margin-top: 9px; color: #333; white-space: nowrap; }
.mic { width: 5px; height: 10px; border: 1px solid #333; border-radius: 2px; margin: 9px 0 0 auto; margin-right: 17px; }
.task-apps { display: flex; height: 16px; flex: none; margin-left: 14px; }
.tk { display: flex; justify-content: center; align-items: flex-end; height: 16px; }
.tk-view { width: 41px; justify-content: flex-start; padding-left: 3px; }
.tk-files { width: 39px; background: linear-gradient(90deg, #2a7a48 0, #2a7a48 10px, #2f4258 10px); margin-right: 8px; }
.tk-chrome { width: 44px; }
.tk-disc { width: 50px; margin-left: 2px; }
.tk-xl { width: 46px; }
.tray { margin-left: auto; display: flex; align-items: flex-end; padding-right: 6px; font-size: 12px; }
.tray-net { margin-left: 43px; }
.tray-vol { margin-left: 16px; font-size: 9px; line-height: 10px; width: 22px; }
.clock { width: 56px; align-self: flex-start; height: 16px; line-height: 20px; font-size: 13.5px; white-space: nowrap; margin-left: 6px; }
```
